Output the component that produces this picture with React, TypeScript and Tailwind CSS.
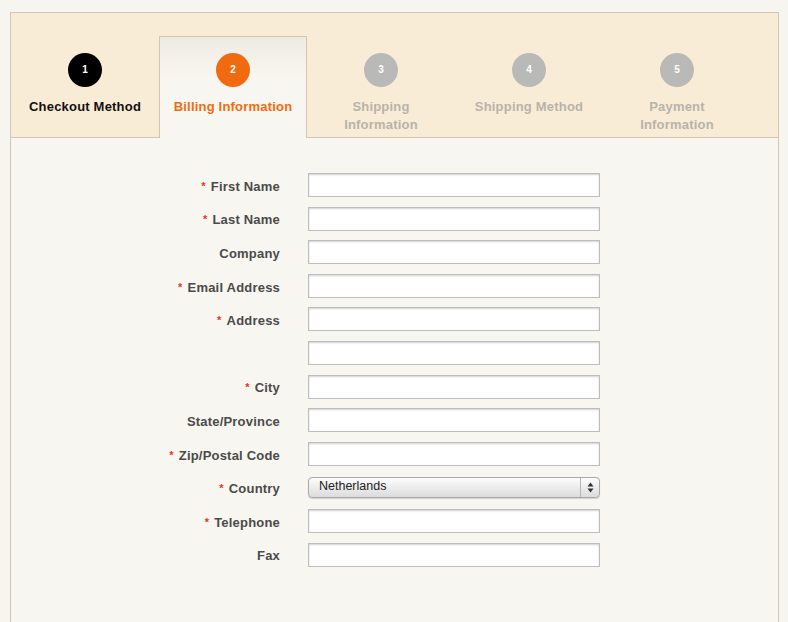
import React from 'react';

const steps = [
  { n: 1, label: ['Checkout Method'], state: 'done' },
  { n: 2, label: ['Billing Information'], state: 'active' },
  { n: 3, label: ['Shipping', 'Information'], state: 'todo' },
  { n: 4, label: ['Shipping Method'], state: 'todo' },
  { n: 5, label: ['Payment', 'Information'], state: 'todo' },
];

const fields = [
  { label: 'First Name', required: true },
  { label: 'Last Name', required: true },
  { label: 'Company', required: false },
  { label: 'Email Address', required: true },
  { label: 'Address', required: true },
  { label: '', required: false },
  { label: 'City', required: true },
  { label: 'State/Province', required: false },
  { label: 'Zip/Postal Code', required: true },
  { label: 'Country', required: true, select: true },
  { label: 'Telephone', required: true },
  { label: 'Fax', required: false },
];

const Step: React.FC<{ n: number; label: string[]; state: string }> = ({ n, label, state }) => {
  const active = state === 'active';
  const circle =
    state === 'done' ? 'bg-black' : active ? 'bg-[#f26a10]' : 'bg-[#b9b9b7]';
  const text =
    state === 'done' ? 'text-[#111]' : active ? 'text-[#f26a10]' : 'text-[#b8b3aa]';
  return (
    <div
      className={`w-[148px] flex flex-col items-center ${
        active
          ? 'mt-[23px] -mb-px pt-[16px] border-x border-t border-[#d3c6b5] bg-gradient-to-b from-[#eeebe3] to-[#f8f6f0] to-40%'
          : 'pt-[40px]'
      }`}
    >
      <div className={`w-[34px] h-[34px] rounded-full flex items-center justify-center ${circle}`}>
        <span className="text-white text-[10px] font-bold leading-none">{n}</span>
      </div>
      <div className={`mt-[11px] text-center text-[13px] leading-[18px] font-bold tracking-[0.2px] ${text}`}>
        {label.map((l) => (
          <div key={l}>{l}</div>
        ))}
      </div>
    </div>
  );
};

export default function App() {
  return (
    <div
      className="min-h-screen bg-[#f7f5f0] pt-[12px] pl-[10px]"
      style={{ fontFamily: '"Liberation Sans", Arial, sans-serif' }}
    >
      <div className="w-[769px] h-[640px] border border-[#d3c6b5] bg-[#f8f6f0]">
        <div className="h-[125px] flex bg-[#f9ecd7] border-b border-[#d3c6b5]">
          {steps.map((s) => (
            <Step key={s.n} {...s} />
          ))}
        </div>

        <div className="pt-[35px] flex flex-col gap-[9.6px]">
          {fields.map((f, i) => (
            <div key={i} className="flex items-center h-[24px]">
              <div className="w-[269px] text-right text-[13px] font-bold tracking-[0.2px] text-[#4a4a4a] pt-[3px]">
                {f.required && <span className="text-[#e8341c] text-[11px] relative -top-[1px] mr-[5px]">*</span>}
                {f.label}
              </div>
              <div className="ml-[28px] w-[292px]">
                {f.select ? (
                  <div className="h-[21px] flex items-stretch rounded-[4px] border border-[#a9a9a9] bg-gradient-to-b from-[#fdfdfd] via-[#ececec] to-[#dcdcdc] shadow-[0_1px_1px_rgba(0,0,0,0.15)]">
                    <div className="flex-1 pl-[10px] text-[12.5px] leading-[17px] text-[#222]">
                      Netherlands
                    </div>
                    <div className="w-[19px] border-l border-[#b4b4b4] flex items-center justify-center">
                      <svg width="7" height="11" viewBox="0 0 7 11">
                        <path d="M3.5 0.5 L6.5 4.5 H0.5 Z" fill="#333" />
                        <path d="M3.5 10.5 L6.5 6.5 H0.5 Z" fill="#333" />
                      </svg>
                    </div>
                  </div>
                ) : (
                  <div className="h-[24px] bg-white border border-[#bdbdbd] shadow-[inset_0_1px_2px_rgba(0,0,0,0.18)]" />
                )}
              </div>
            </div>
          ))}
        </div>
      </div>
    </div>
  );
}
